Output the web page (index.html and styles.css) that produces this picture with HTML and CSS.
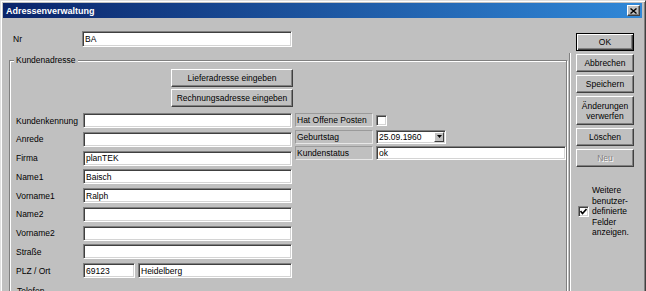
FILE: index.html
```html
<!DOCTYPE html>
<html lang="de">
<head>
  <meta charset="UTF-8">
  <title>Adressenverwaltung</title>
  <link rel="stylesheet" href="styles.css">
</head>
<body>
  <div class="window">
    <div class="titlebar">
      <span class="title">Adressenverwaltung</span>
      <span class="close">
        <svg width="7" height="6" viewBox="0 0 7 6"><path d="M0.5 0.5 L6.5 5.5 M6.5 0.5 L0.5 5.5" stroke="#000" stroke-width="1.4"/></svg>
      </span>
    </div>
    <div class="content">
      <div class="main">
        <div class="nr-row">
          <span class="lbl nr-lbl">Nr</span>
          <div class="edit nr">BA</div>
        </div>
        <div class="group kunden">
          <span class="legend">Kundenadresse</span>
          <div class="addr-buttons">
            <div class="btn wide">Lieferadresse eingeben</div>
            <div class="btn wide">Rechnungsadresse eingeben</div>
          </div>
          <div class="fields">
            <div class="col-left">
              <div class="row"><span class="lbl">Kundenkennung</span><div class="edit"></div></div>
              <div class="row"><span class="lbl">Anrede</span><div class="edit"></div></div>
              <div class="row"><span class="lbl">Firma</span><div class="edit">planTEK</div></div>
              <div class="row"><span class="lbl">Name1</span><div class="edit">Baisch</div></div>
              <div class="row"><span class="lbl">Vorname1</span><div class="edit">Ralph</div></div>
              <div class="row"><span class="lbl">Name2</span><div class="edit"></div></div>
              <div class="row"><span class="lbl">Vorname2</span><div class="edit"></div></div>
              <div class="row"><span class="lbl">Straße</span><div class="edit"></div></div>
              <div class="row"><span class="lbl">PLZ / Ort</span><div class="edit plz">69123</div><div class="edit ort">Heidelberg</div></div>
              <div class="group telefon"><span class="legend">Telefon</span></div>
            </div>
            <div class="col-mid">
              <div class="mrow"><span class="tag">Hat Offene Posten</span><span class="check"></span></div>
              <div class="mrow">
                <span class="tag">Geburtstag</span>
                <div class="edit combo">25.09.1960<span class="drop"><svg width="5" height="3" viewBox="0 0 5 3"><path d="M0 0 H5 L2.5 3 Z" fill="#000"/></svg></span></div>
              </div>
              <div class="mrow"><span class="tag">Kundenstatus</span><div class="edit status">ok</div></div>
            </div>
          </div>
        </div>
      </div>
      <div class="divider"></div>
      <div class="side">
        <div class="btn default">OK</div>
        <div class="btn">Abbrechen</div>
        <div class="btn">Speichern</div>
        <div class="btn tall">Änderungen<br>verwerfen</div>
        <div class="btn">Löschen</div>
        <div class="btn disabled">Neu</div>
        <div class="extra">
          <span class="check checked">
            <svg width="7" height="7" viewBox="0 0 7 7"><path d="M0.5 3 L2.5 5.5 L6.5 1" stroke="#000" stroke-width="1.6" fill="none"/></svg>
          </span>
          <span class="extra-text">Weitere<br>benutzer-<br>definierte<br>Felder<br>anzeigen.</span>
        </div>
      </div>
    </div>
  </div>
</body>
</html>
```

FILE: styles.css
```css
* {
  box-sizing: border-box;
}
html, body {
  margin: 0;
  height: 291px;
  overflow: hidden;
  background: #c0c0c0;
  font-family: "Liberation Sans", Arial, sans-serif;
  font-size: 8.5px;
  color: #000;
}
.window {
  width: 646px;
  height: 320px;
  border-top: 1px solid #dfdfdf;
  border-left: 1px solid #dfdfdf;
  border-right: 1px solid #404040;
  box-shadow: inset 1px 1px #fff, inset -1px 0 #808080;
  padding: 2px 3px 0 2px;
}
.titlebar {
  height: 15px;
  display: flex;
  align-items: center;
  justify-content: space-between;
  padding: 0 2px 0 3px;
  background: linear-gradient(to right, #0a246a, #3088d8);
}
.title {
  color: #fff;
  font-weight: bold;
  font-size: 9px;
}
.close {
  width: 13px;
  height: 11px;
  display: flex;
  align-items: center;
  justify-content: center;
  background: #c0c0c0;
  border: 1px solid;
  border-color: #fff #404040 #404040 #fff;
  box-shadow: inset -1px -1px #808080;
}
.content {
  display: flex;
  height: 300px;
}
.main {
  width: 566px;
  padding-top: 13px;
}

/* Felder */
.nr-row {
  display: flex;
  align-items: center;
  padding-left: 10px;
}
.lbl {
  width: 67px;
  flex: none;
}
.nr-lbl {
  width: 69px;
}
.edit {
  display: flex;
  align-items: center;
  width: 209px;
  height: 15px;
  padding-left: 2px;
  background: #fff;
  border: 1px solid;
  border-color: #808080 #fff #fff #808080;
  box-shadow: inset 1px 1px #404040, inset -1px -1px #d4d4d4;
  white-space: nowrap;
  overflow: hidden;
}
.edit.nr {
  width: 210px;
  height: 16px;
}
.edit.plz {
  width: 52px;
  margin-right: 3px;
}
.edit.ort {
  width: 154px;
}

/* Gruppenrahmen */
.group {
  display: flex;
  flex-direction: column;
  border: 1px solid #808080;
  box-shadow: inset 1px 1px #fff, 1px 1px #fff;
}
.legend {
  align-self: flex-start;
  margin: -6px 0 0 4px;
  padding: 0 2px;
  line-height: 11px;
  background: #c0c0c0;
}
.kunden {
  margin: 13px 2px 0 6px;
  height: 300px;
}
.addr-buttons {
  display: flex;
  flex-direction: column;
  gap: 2px;
  margin: 3px 0 0 161px;
}
.btn {
  display: flex;
  align-items: center;
  justify-content: center;
  text-align: center;
  height: 18px;
  line-height: 10px;
  background: #c0c0c0;
  border: 1px solid;
  border-color: #fff #404040 #404040 #fff;
  box-shadow: inset -1px -1px #808080;
}
.btn.wide {
  width: 122px;
}
.fields {
  display: flex;
  margin-top: 6px;
}
.col-left {
  width: 282px;
  display: flex;
  flex-direction: column;
  gap: 3.75px;
}
.row {
  display: flex;
  align-items: center;
  padding-left: 6px;
}
.telefon {
  width: 279px;
  height: 40px;
  margin-top: 9px;
}
.col-mid {
  flex: 1;
  margin-left: 3px;
  display: flex;
  flex-direction: column;
  gap: 2.5px;
}
.mrow {
  display: flex;
  align-items: center;
  gap: 3px;
  height: 14px;
}
.tag {
  width: 78px;
  height: 14px;
  line-height: 12px;
  padding-left: 1px;
  border: 1px solid;
  border-color: #9a9a9a #e8e8e8 #e8e8e8 #9a9a9a;
}
.check {
  width: 11px;
  height: 11px;
  display: flex;
  align-items: center;
  justify-content: center;
  background: #fff;
  border: 1px solid;
  border-color: #808080 #fff #fff #808080;
  box-shadow: inset 1px 1px #404040, inset -1px -1px #d4d4d4;
}
.edit.combo {
  width: 70px;
  height: 14px;
}
.drop {
  width: 10px;
  height: 10px;
  margin: 0 1px 0 auto;
  display: flex;
  align-items: center;
  justify-content: center;
  background: #c0c0c0;
  border: 1px solid;
  border-color: #fff #404040 #404040 #fff;
}
.edit.status {
  flex: 1;
  width: auto;
  height: 14px;
}

/* rechte Leiste */
.divider {
  width: 2px;
  margin-top: 35px;
  border-left: 1px solid #808080;
  border-right: 1px solid #fff;
}
.side {
  flex: 1;
  display: flex;
  flex-direction: column;
  gap: 3px;
  padding: 15px 0 0 5px;
}
.side .btn {
  width: 58px;
}
.btn.default {
  border-color: #000;
  box-shadow: inset 1px 1px #fff, inset -1px -1px #404040, inset -2px -2px #808080;
}
.side .btn.tall {
  height: 29px;
}
.btn.disabled {
  color: #808080;
  text-shadow: 1px 1px #fff;
}
.extra {
  display: flex;
  align-items: center;
  gap: 3px;
  margin: 15px 0 0 2px;
}
.extra-text {
  line-height: 10.5px;
}
```
